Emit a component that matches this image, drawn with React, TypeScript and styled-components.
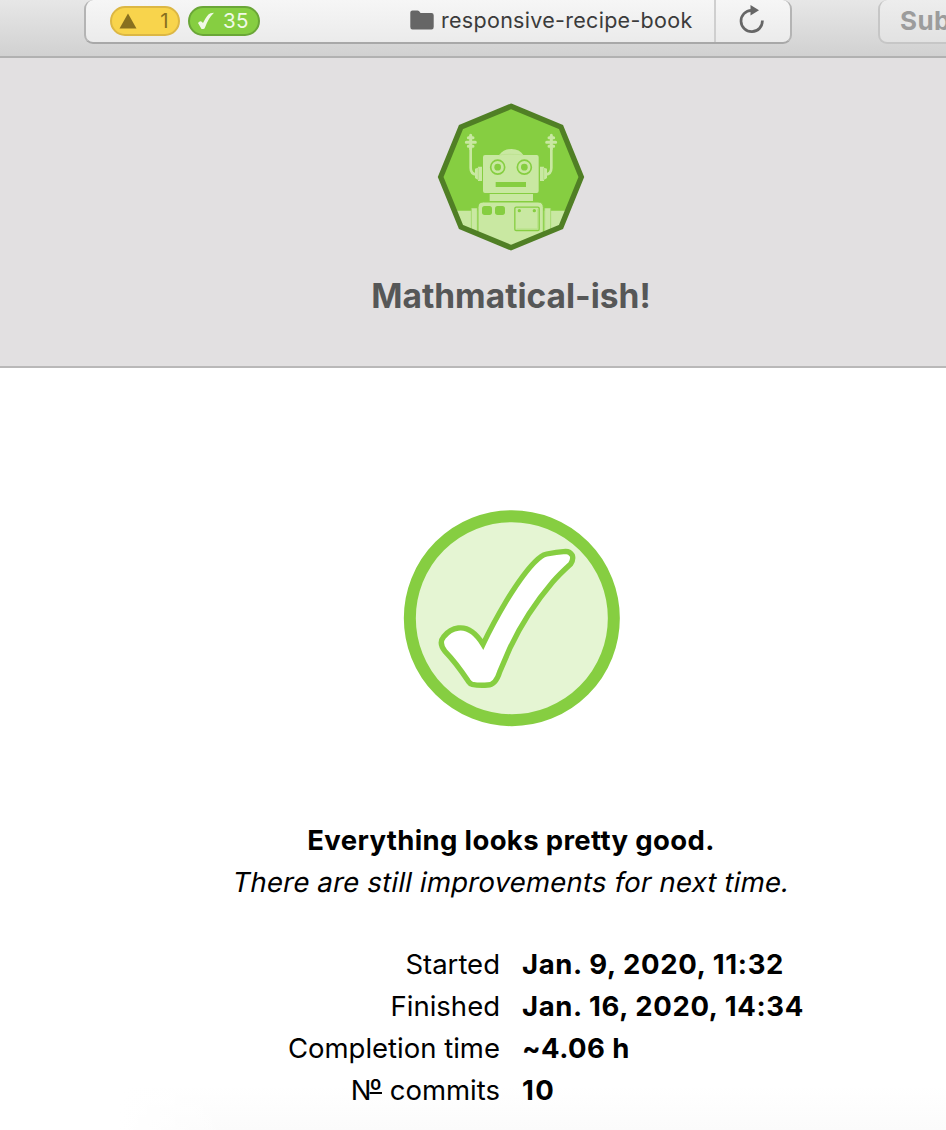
import React from "react";
import styled, { createGlobalStyle } from "styled-components";

const GlobalStyle = createGlobalStyle`
  * { box-sizing: border-box; }
  body { margin: 0; background: #fff; overflow: hidden; font-family: Inter, "Liberation Sans", sans-serif; }
  svg { display: block; }
`;

const Viewport = styled.div`
  width: 100%;
  height: 1130px;
  overflow: hidden;
`;

const Page = styled.div`
  width: 1022px;
  height: 1130px;
  display: flex;
  flex-direction: column;
  background:
    linear-gradient(to right, #fff 120px, rgba(255, 255, 255, 0) 230px),
    linear-gradient(to top, #fbfbfb, #fff 44px);
`;

const Toolbar = styled.header`
  height: 58px;
  flex: none;
  display: flex;
  align-items: flex-start;
  padding-left: 84px;
  background: linear-gradient(#e7e7e7, #d1d1d1);
  border-bottom: 2px solid #b1b1b1;
`;

const AddressBar = styled.div`
  width: 708px;
  height: 44px;
  display: flex;
  background: linear-gradient(#f6f6f6, #ebebeb);
  border: 2px solid #b4b4b4;
  border-bottom-color: #a8a8a8;
  border-top: 0;
  border-radius: 9px;
`;

const AddressMain = styled.div`
  width: 630px;
  height: 42px;
  display: flex;
  align-items: flex-start;
  padding: 6px 0 0 24px;
  border-right: 2px solid #cfcfcf;
`;

const Badge = styled.div<{ $tone: "warning" | "success" }>`
  width: ${(p) => (p.$tone === "warning" ? 70 : 72)}px;
  height: 30px;
  display: flex;
  align-items: center;
  justify-content: space-between;
  padding: 0 9px 0 7px;
  margin-right: 8px;
  border-radius: 15px;
  border: 2px solid ${(p) => (p.$tone === "warning" ? "#dcb744" : "#6aa637")};
  background: ${(p) => (p.$tone === "warning" ? "#f8d44c" : "#86ce41")};
  color: ${(p) => (p.$tone === "warning" ? "#88701f" : "#f1f9e7")};
  font-size: 20.5px;
  line-height: 26px;
  letter-spacing: 0.5px;
`;

const ProjectName = styled.div`
  display: flex;
  align-items: center;
  height: 28px;
  gap: 7px;
  margin-left: 142px;
  color: #3b3b3b;
  font-size: 21.5px;
  letter-spacing: 0.29px;
  white-space: nowrap;
`;

const ReloadButton = styled.div`
  padding: 3px 0 0 21px;
`;

const SubmitButton = styled.div`
  width: 144px;
  height: 44px;
  flex: none;
  margin-left: 86px;
  padding: 5px 0 0 20px;
  border: 2px solid #c6c6c6;
  border-top: 0;
  border-radius: 9px;
  background: linear-gradient(#ededed, #e2e2e2);
  color: #9c9c9c;
  font-size: 26px;
  font-weight: 700;
  line-height: 32px;
  letter-spacing: 0.4px;
`;

const Hero = styled.section`
  height: 310px;
  flex: none;
  display: flex;
  flex-direction: column;
  align-items: center;
  padding-top: 40px;
  background: #e2e0e1;
  border-bottom: 2px solid #b9b8b8;
`;

const Title = styled.h1`
  margin: 19px 0 0;
  color: #565757;
  font-size: 33.5px;
  font-weight: 700;
  line-height: 42px;
  letter-spacing: 0;
`;

const Report = styled.main`
  display: flex;
  flex-direction: column;
  align-items: center;
  padding-top: 141px;
  font-size: 27.5px;
  line-height: 42px;
  color: #000;
`;

const Headline = styled.h2`
  margin: 92px 0 0;
  font-size: 27.5px;
  font-weight: 700;
  letter-spacing: 0.35px;
`;

const Remark = styled.p`
  margin: 0;
  transform: skewX(-11deg);
  letter-spacing: 0.22px;
`;

const Facts = styled.dl`
  width: 1022px;
  margin: 40px 0 0;
  display: grid;
  grid-template-columns: 500px 500px;
  grid-auto-rows: 42px;
  column-gap: 22px;
`;

const FactLabel = styled.dt`
  text-align: right;
`;

const Ordinal = styled.span`
  margin-left: -2px;
  line-height: 1;
  vertical-align: 1px;
  text-decoration: underline 2px;
  text-underline-offset: -7px;
  text-decoration-skip-ink: none;
`;

const FactValue = styled.dd<{ $spacing: number }>`
  margin: 0;
  font-weight: 700;
  letter-spacing: ${(p) => p.$spacing}px;
`;

const facts = [
  { id: "started", label: "Started", value: "Jan. 9, 2020, 11:32", spacing: 0.65 },
  { id: "finished", label: "Finished", value: "Jan. 16, 2020, 14:34", spacing: 0.62 },
  { id: "time", label: "Completion time", value: "~4.06 h", spacing: 0.45 },
  { id: "commits", label: <>N<Ordinal>º</Ordinal> commits</>, value: "10", spacing: 1.4 },
];

const Antenna = () => (
  <>
    <path d="M122 150V210Q122 228 140 230" fill="none" stroke="#c9e8a2" strokeWidth="8" />
    <path d="M122 112V152M115 119H129M109 132.500H136M115 145H129" fill="none" stroke="#c9e8a2" strokeWidth="9" strokeLinecap="round" />
    <path d="M135 212Q139 211 144 209V206H156V249H144V245Q139 243 135 240Z" fill="#c9e8a2" />
    <path d="M145 209V246" stroke="#a9db72" strokeWidth="2" />
  </>
);

const Robot = () => (
  <svg width="162" height="158" viewBox="0 0 486 474">
    <defs>
      <clipPath id="octagon">
        <path d="M243 25L393 87L454 237L393 387L243 449L93 387L32 237L93 87Z" />
      </clipPath>
    </defs>
    <path d="M243 25L393 87L454 237L393 387L243 449L93 387L32 237L93 87Z" fill="#86ce41" />
    <g clipPath="url(#octagon)">
      <path d="M30 338H456V450H30Z" fill="#c9e8a2" />
      <path d="M124 331H142V450H124ZM344 331H362V450H344Z" fill="#c9e8a2" />
      <path d="M124 331V450M142 331V450M344 331V450M362 331V450" stroke="#9dd663" strokeWidth="2.500" />
      <path d="M144 450V328Q144 312 160 312H324Q340 312 340 328V450Z" fill="#c9e8a2" stroke="#86ce41" strokeWidth="3" />
      <rect x="179" y="288" width="130" height="21" fill="#c9e8a2" />
      <rect x="156" y="324" width="30" height="27" rx="8" fill="#86ce41" />
      <rect x="195" y="324" width="30" height="27" rx="8" fill="#86ce41" />
      <rect x="254.500" y="327.500" width="73" height="70" rx="4" fill="none" stroke="#86ce41" strokeWidth="4" />
      <path d="M260 392.500H322.500V333" fill="none" stroke="#b3df80" strokeWidth="2" />
      <circle cx="268" cy="338" r="5" fill="#86ce41" />
      <circle cx="313" cy="338" r="5" fill="#86ce41" />
    </g>
    <Antenna />
    <g transform="translate(486 0) scale(-1 1)"><Antenna /></g>
    <path d="M165 171H208Q220 153 245 153Q269 153 280 171H320Q326 171 326 177V279Q326 285 320 285H165Q159 285 159 279V177Q159 171 165 171Z" fill="#c9e8a2" />
    <path d="M207 171Q219 169 243 169Q267 169 279 171" fill="none" stroke="#b9e18b" strokeWidth="2" />
    {[203, 283].map((x) => (
      <React.Fragment key={x}>
        <circle cx={x} cy="207.500" r="21" fill="#c9e8a2" stroke="#86ce41" strokeWidth="5" />
        <circle cx={x} cy="207.500" r="10" fill="#86ce41" />
      </React.Fragment>
    ))}
    <path d="M197 252H288V267H197Z" fill="#86ce41" />
    <path d="M243 25L393 87L454 237L393 387L243 449L93 387L32 237L93 87Z" fill="none" stroke="#507f25" strokeWidth="16" />
  </svg>
);

const PassMark = () => (
  <svg width="218" height="218" viewBox="24 26 654 654">
    <circle cx="353.500" cy="353.500" r="306" fill="#e5f5d3" stroke="#86ce41" strokeWidth="36" />
    <path
      transform="translate(2 0)"
      d="M265 432Q294 371 335 302Q400 196 440 168Q447 163 456 161Q485 155 513 153Q526 153 533 165Q537 177 528 191Q494 222 474 245Q395 338 345 445L315 515Q303 554 279 554Q253 556 232 552Q226 550 221 543Q185 488 151 453Q131 428 147 409Q166 386 191 383Q232 378 265 432Z"
      fill="#fff"
      stroke="#86ce41"
      strokeWidth="16"
    />
  </svg>
);

export default function App() {
  return (
    <Viewport>
      <GlobalStyle />
      <Page>
        <Toolbar>
          <AddressBar>
            <AddressMain>
              <Badge $tone="warning">
                <svg width="18" height="16" viewBox="0 0 18 16"><path d="M9 0.500L17.500 15.500H0.500Z" fill="currentColor" /></svg>
                1
              </Badge>
              <Badge $tone="success">
                <svg width="18" height="18" viewBox="0 0 18 18"><path d="M1 11Q3.500 7.500 6 11Q10 2.500 13.500 1.200L17 0.800Q11.500 6 8 15.500Q7.500 17 6 17H4.500Z" fill="currentColor" /></svg>
                35
              </Badge>
              <ProjectName>
                <svg width="24" height="20" viewBox="0 0 24 20"><path d="M2.500 0.500H7.500Q8.500 0.500 9.200 1.300L10.500 3H21.500Q23.700 3 23.700 5.200V17Q23.700 19.500 21.500 19.500H2.500Q0.300 19.500 0.300 17V2.500Q0.300 0.500 2.500 0.500Z" fill="#666" /></svg>
                responsive-recipe-book
              </ProjectName>
            </AddressMain>
            <ReloadButton>
              <svg width="30" height="32" viewBox="0 0 30 32">
                <path d="M14.500 7.300A10.700 10.700 0 1 0 25.400 17.500" fill="none" stroke="#666" strokeWidth="2.700" />
                <path d="M13.500 2L22 7.200L13.500 12.500Z" fill="#666" />
              </svg>
            </ReloadButton>
          </AddressBar>
          <SubmitButton>Submit</SubmitButton>
        </Toolbar>
        <Hero>
          <Robot />
          <Title>Mathmatical-ish!</Title>
        </Hero>
        <Report>
          <PassMark />
          <Headline>Everything looks pretty good.</Headline>
          <Remark>There are still improvements for next time.</Remark>
          <Facts>
            {facts.map((fact) => (
              <React.Fragment key={fact.id}>
                <FactLabel>{fact.label}</FactLabel>
                <FactValue $spacing={fact.spacing}>{fact.value}</FactValue>
              </React.Fragment>
            ))}
          </Facts>
        </Report>
      </Page>
    </Viewport>
  );
}
